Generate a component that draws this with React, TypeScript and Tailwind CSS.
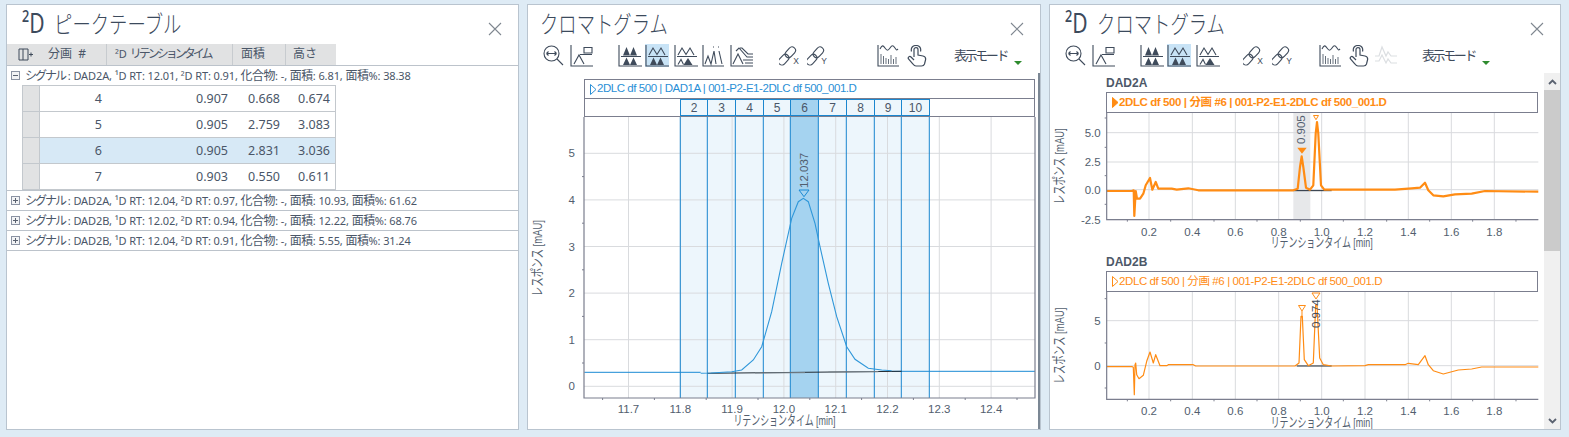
import React from "react";

const INK = "#3f4b5b";

function CloseX() {
  return (
    <svg width="14" height="14" viewBox="0 0 14 14" className="shrink-0">
      <path d="M1 1L13 13M13 1L1 13" stroke="#7f8790" strokeWidth="1.1" fill="none" />
    </svg>
  );
}

function Zoom() {
  return (
    <svg width="21" height="21" viewBox="0 0 21 21" fill="none" stroke={INK} strokeWidth="1.1">
      <circle cx="8.5" cy="8.5" r="7.5" />
      <path d="M3.5 8.5H13.5M3.5 8.5L5.5 6.5M3.5 8.5L5.5 10.5M13.5 8.5L11.5 6.5M13.5 8.5L11.5 10.5M14 14L20 20" />
    </svg>
  );
}

function BoxPeak() {
  return (
    <svg width="23" height="22" viewBox="0 0 23 22" fill="none" stroke={INK} strokeWidth="1.1">
      <path d="M1 0V21H23M4 19L9 10L14 19" />
      <path d="M14 2.500H22V8H14ZM10 9.500H22" />
    </svg>
  );
}

function Peaks({ v }: { v: number }) {
  return (
    <svg width="24" height="22" viewBox="0 0 24 22" fill="none" stroke={INK} strokeWidth="1.1">
      <path d="M1 0V21H24M3 11.500H23" />
      {v === 0 ? (
        <path d="M8.500 2L12 10.500H5ZM15.500 2L19 10.500H12Z" fill={INK} stroke="none" />
      ) : (
        <path d="M4 10L8 3L12 9.500L16 3L20 10" />
      )}
      {v === 2 ? (
        <>
          <path d="M4 19.500L7 14.500L9.500 19.500" />
          <path d="M14 13L18.500 20H9.500Z" fill={INK} stroke="none" />
        </>
      ) : (
        <path d="M8.500 12.500L12 20H5ZM15.500 12.500L19 20H12Z" fill={INK} stroke="none" />
      )}
    </svg>
  );
}

function Peaks4() {
  return (
    <svg width="22" height="22" viewBox="0 0 22 22" fill="none" stroke={INK} strokeWidth="1.1">
      <path d="M1 0V21H22M3 19L6 11L9 19L12 6L14 19M17 6L20 19" />
      <path d="M11 2H13M16 2H18" strokeDasharray="1 1" />
    </svg>
  );
}

function PeaksOverlay() {
  return (
    <svg width="23" height="22" viewBox="0 0 23 22" fill="none" stroke={INK} strokeWidth="1.1">
      <path d="M1 0V21H23M3 19L8 9L13 19" />
      <path d="M6 6L9 3L17 12H23M10 3H12L18 9H23M13 15H23M15 18H23" />
    </svg>
  );
}

function Link({ a }: { a: string }) {
  return (
    <span className="relative block h-[22px] w-[22px]">
      <svg width="20" height="22" viewBox="0 0 20 22" fill="none" stroke={INK} strokeWidth="1.1">
        <g transform="rotate(-48 8 11)">
          <rect x="-3" y="7.500" width="12" height="7" rx="3.500" />
          <rect x="7" y="7.500" width="12" height="7" rx="3.500" />
        </g>
      </svg>
      <span className="absolute bottom-[1px] right-[2px] font-['Liberation_Sans',sans-serif] text-[8.5px] leading-none text-[#3f4b5b]">
        {a}
      </span>
    </span>
  );
}

function Bars() {
  return (
    <svg width="22" height="22" viewBox="0 0 22 22" fill="none" stroke={INK} strokeWidth="1.1">
      <path d="M1 0V21H22" />
      <path d="M3 4C5 0 6 0 8 3S11 6 13 3S16 0 18 3S20 5 21 4" />
      <path d="M4 9V19M6.500 11V19M9 13V19M11.500 14V19M14 10V19M16.500 14V19M19 12V19" strokeWidth="0.8" />
    </svg>
  );
}

function Hand() {
  return (
    <svg width="20" height="22" viewBox="0 0 20 22" fill="none" stroke={INK} strokeWidth="1.2">
      <path d="M7 12V4.500C7 2 11 2 11 4.500V10L16 11C18 11.500 19 13 18.500 15L17.500 19C17 20.500 16 21 14.500 21H9C7.500 21 7 20.500 6 19L1.500 14C0.500 12.500 2.500 10.500 4 12L7 15" />
      <path d="M4.500 6.500C3.500 2.500 6 0.500 9 0.500C12 0.500 14.500 2.500 13.500 6.500" />
    </svg>
  );
}

function Faded() {
  return (
    <svg width="22" height="22" viewBox="0 0 22 22" fill="none" stroke="#dcdfe2" strokeWidth="1.2">
      <path d="M0 11H4L7 2L11 11L13 7L16 11H22M0 16H4L7 10L11 18L13 14L16 18H22" />
    </svg>
  );
}

function Mode({ ml }: { ml: string }) {
  return (
    <div className={`flex h-[23px] items-end ${ml}`}>
      <span className="mb-[2px] font-['Noto_Sans_CJK_JP',sans-serif] text-[13px] leading-[20px] tracking-[-2.4px] text-[#3f4b5b]">
        表示モード
      </span>
      <svg width="8" height="4" viewBox="0 0 8 4" className="mb-[2px] ml-[7px]">
        <path d="M0 0H8L4 4Z" fill="#2e8b2e" />
      </svg>
    </div>
  );
}

function Selected({ children }: { children: React.ReactNode }) {
  return <div className="flex h-[23px] w-[24px] items-center justify-center bg-[#c8e3f6]">{children}</div>;
}

function Header({ title, sup, pad }: { title: string; sup?: boolean; pad: string }) {
  return (
    <div className={`flex h-[39px] shrink-0 items-center justify-between pr-[16px] ${pad}`}>
      <h1 className="mb-[4px] origin-left scale-x-[0.78] whitespace-nowrap font-['Noto_Sans_CJK_JP',sans-serif] text-[23.5px] font-light leading-[34px] text-[#3c4a5c]">
        {sup ? <span className="mr-[12px] font-['Noto_Sans',sans-serif] text-[27px] font-normal">²D</span> : null}
        {title}
      </h1>
      <div className="mt-[8px]">
        <CloseX />
      </div>
    </div>
  );
}

const K = ({ children }: { children: React.ReactNode }) => (
  <span className="text-[12px] tracking-[-2px]">{children}</span>
);
const H = ({ children }: { children: React.ReactNode }) => <span className="text-[12px] tracking-[-0.5px]">{children}</span>;

function GroupRow({ open, s, d1, d2, a, p, h = "h-[20px]" }: { open?: boolean; s: string; d1: string; d2: string; a: string; p: string; h?: string }) {
  return (
    <div className={`flex items-center border-b border-[#bcc3cb] pl-[4px] ${h}`}>
      <svg width="9" height="9" viewBox="0 0 9 9" className="mr-[5px] shrink-0">
        <rect x="0.500" y="0.500" width="8" height="8" fill="#f2f3f5" stroke="#8b93a3" />
        <path d={open ? "M2 4.500H7" : "M2 4.500H7M4.500 2V7"} stroke="#5a6270" />
      </svg>
      <span className="whitespace-nowrap text-[11px] tracking-[-0.1px] text-[#4a5668]">
        <K>シグナル</K> : DAD{s}, ¹D RT: {d1}, ²D RT: {d2}, <H>化合物</H>: -, <H>面積</H>: {a}, <H>面積</H>%: {p}
      </span>
    </div>
  );
}

function PeakTable() {
  const rows = [
    ["4", "0.907", "0.668", "0.674"],
    ["5", "0.905", "2.759", "3.083"],
    ["6", "0.905", "2.831", "3.036"],
    ["7", "0.903", "0.550", "0.611"],
  ];
  return (
    <section className="flex h-[426px] w-[513px] shrink-0 flex-col border border-[#b9c4cf] bg-white">
      <Header title="ピークテーブル" sup pad="pl-[15px]" />
      <div className="font-['Noto_Sans','Noto_Sans_CJK_JP',sans-serif]">
        <div className="flex h-[21px] w-[329px] bg-[#e1e2e3] text-[12px] text-[#4a5668]">
          <div className="flex w-[34px] items-center justify-center pl-[3px]">
            <svg width="15" height="13" viewBox="0 0 15 13" fill="none" stroke={INK} strokeWidth="1">
              <path d="M10 1H1V12H10V1M5 1V12M11 6.500H15M13 4.500V8.500" />
            </svg>
          </div>
          <div className="w-[66px] border-r border-[#c7cbcf] pl-[7px] leading-[20px]">分画&nbsp; #</div>
          <div className="w-[126px] border-r border-[#c7cbcf] pl-[8px] leading-[20px]">
            <span className="text-[11px]">²D </span>
            <span className="tracking-[-3px]">リテンションタイム</span>
          </div>
          <div className="w-[53px] border-r border-[#c7cbcf] pl-[8px] leading-[20px]">面積</div>
          <div className="w-[49px] pl-[7px] leading-[20px]">高さ</div>
        </div>
        <div className="border-t border-[#bcc3cb]" />
        <GroupRow open h="h-[19px] border-b-0" s="2A" d1="12.01" d2="0.91" a="6.81" p="38.38" />
        <div className="border-b border-[#bcc3cb] pl-[15px]">
          <div className="w-[314px] border-l border-t border-[#c3c8cd]">
            {rows.map((r, i) => (
              <div
                key={r[0]}
                className={`flex h-[26px] border-b border-[#c3c8cd] text-[12.5px] leading-[25px] text-[#4a5668] ${i === 2 ? "bg-[#d7e9f6]" : ""}`}
              >
                <div className="w-[17px] border-r border-[#c3c8cd] bg-[#e1e2e3]" />
                <div className="w-[66px] pr-[4px] text-right">{r[0]}</div>
                <div className="w-[126px] pr-[4px] text-right">{r[1]}</div>
                <div className="w-[53px] pr-[5px] text-right">{r[2]}</div>
                <div className="w-[51px] border-r border-[#c3c8cd] pr-[5px] text-right">{r[3]}</div>
              </div>
            ))}
          </div>
        </div>
        <GroupRow s="2A" d1="12.04" d2="0.97" a="10.93" p="61.62" />
        <GroupRow s="2B" d1="12.02" d2="0.94" a="12.22" p="68.76" />
        <GroupRow s="2B" d1="12.04" d2="0.91" a="5.55" p="31.24" />
      </div>
    </section>
  );
}

const GRID = "#d9dbde";
const AXIS = "#7b7e8e";
const TICK = "#525e6e";
const FONT = "'Liberation Sans','Noto Sans CJK JP',sans-serif";

function MainChart() {
  const ox = 528;
  const oy = 117;
  const X = (t: number) => 680.3 + (t - 11.8) * 518 - ox;
  const Y = (v: number) => 386.3 - 46.6 * v - oy;
  const left = 584 - ox;
  const right = 1035 - ox;
  const top = 0;
  const bottom = 398 - oy;
  const bands = [680.3, 707.3, 735.3, 763.3, 790.3, 818.3, 846.3, 874.3, 901.3, 929.3].map((b) => b - ox);
  const z = (a: number, b: number) => `${(a / 3 + 525 - ox).toFixed(1)},${(b / 3 + 130 - oy).toFixed(1)}`;
  const curve = [
    [527, 730], [557, 729], [620, 725], [650, 720], [685, 690], [710, 650], [740, 545], [770, 400], [800, 265], [820, 215],
    [835, 205], [850, 215], [870, 280], [885, 350], [910, 460], [935, 560], [965, 650], [990, 688], [1030, 715], [1070, 720], [1100, 722],
  ];
  return (
    <svg width="510" height="312" viewBox="0 0 510 312" className="block">
      <rect x={bands[0]} y={top} width={bands[9] - bands[0]} height={bottom} fill="#edf6fc" />
      {[11.7, 11.8, 11.9, 12.0, 12.1, 12.2, 12.3, 12.4].map((t) => (
        <line key={t} x1={X(t)} x2={X(t)} y1={top} y2={bottom} stroke={GRID} strokeWidth="1" />
      ))}
      {[0, 1, 2, 3, 4, 5].map((v) => (
        <line key={v} x1={left} x2={right} y1={Y(v)} y2={Y(v)} stroke={GRID} strokeWidth="1" />
      ))}
      <rect x={bands[4]} y={top} width={bands[5] - bands[4]} height={bottom} fill="#a5d3f0" />
      {bands.map((b) => (
        <line key={b} x1={b} x2={b} y1={top} y2={bottom} stroke="#1a86cf" strokeWidth="1" />
      ))}
      <polyline points={`${z(178, 727)} ${z(527, 727)}`} stroke="#1a8ad4" fill="none" />
      <polyline points={`${z(1100, 724)} ${z(1530, 724)}`} stroke="#1a8ad4" fill="none" />
      <polyline points={`${z(547, 730)} ${z(1130, 724)}`} stroke="#222b33" fill="none" />
      <polyline points={`${z(690, 729)} ${z(840, 728)}`} stroke="#7f8a92" fill="none" />
      <polyline points={`${z(910, 726)} ${z(1060, 725)}`} stroke="#7f8a92" fill="none" />
      <polyline points={curve.map((p) => z(p[0], p[1])).join(" ")} fill="none" stroke="#2f97d9" strokeWidth="1.1" />
      <path d="M271 73H281L276 79.700Z" fill="none" stroke="#1a8ad4" />
      <text transform="translate(279.500 71) rotate(-90)" fontFamily={FONT} fontSize="11.500" fill={TICK}>
        12.037
      </text>
      <path d={`M${left} 0V${bottom}H${right}V0`} fill="none" stroke={AXIS} strokeWidth="1.2" />
      {[0, 1, 2, 3, 4, 5].map((v) => (
        <text key={v} x={left - 9} y={Y(v) + 4} textAnchor="end" fontFamily={FONT} fontSize="11.500" fill={TICK}>
          {v}
        </text>
      ))}
      {[0.5, 1.5, 2.5, 3.5, 4.5].map((v) => (
        <line key={v} x1={left - 2} x2={left} y1={Y(v)} y2={Y(v)} stroke={AXIS} />
      ))}
      {[11.65, 11.75, 11.85, 11.95, 12.05, 12.15, 12.25, 12.35, 12.45].map((t) => (
        <line key={t} x1={X(t)} x2={X(t)} y1={bottom} y2={bottom + 2} stroke={AXIS} />
      ))}
      {[11.7, 11.8, 11.9, 12.0, 12.1, 12.2, 12.3, 12.4].map((t) => (
        <text key={t} x={X(t)} y={bottom + 15} textAnchor="middle" fontFamily={FONT} fontSize="11.500" fill={TICK}>
          {t.toFixed(1)}
        </text>
      ))}
      <text x={X(12.0) + 0.5} y={bottom + 27} textAnchor="middle" textLength="102" lengthAdjust="spacingAndGlyphs" fontFamily={FONT} fontSize="13.500" fill={TICK}>
        リテンションタイム [min]
      </text>
      <text transform={`translate(14 ${Y(2.75)}) rotate(-90)`} textAnchor="middle" textLength="76" lengthAdjust="spacingAndGlyphs" fontFamily={FONT} fontSize="13.500" fill={TICK}>
        レスポンス [mAU]
      </text>
    </svg>
  );
}

function ChromPanel() {
  const nums = [
    [2, 27], [3, 28], [4, 28], [5, 27], [6, 28], [7, 28], [8, 28], [9, 27], [10, 29],
  ];
  return (
    <section className="flex h-[426px] w-[514px] shrink-0 flex-col border border-[#b9c4cf] bg-white">
      <Header title="クロマトグラム" pad="pl-[12px]" />
      <div className="flex h-[23px] shrink-0 items-center pl-[15px]">
        <Zoom />
        <div className="ml-[6px]"><BoxPeak /></div>
        <div className="ml-[25px]"><Peaks v={0} /></div>
        <div className="ml-[3px]"><Selected><Peaks v={1} /></Selected></div>
        <div className="ml-[5px]"><Peaks v={2} /></div>
        <div className="ml-[4px]"><Peaks4 /></div>
        <div className="ml-[6px]"><PeaksOverlay /></div>
        <div className="ml-[26px]"><Link a="X" /></div>
        <div className="ml-[6px]"><Link a="Y" /></div>
        <div className="ml-[48px]"><Bars /></div>
        <div className="ml-[8px]"><Hand /></div>
        <Mode ml="ml-[27px]" />
      </div>
      <div className="mt-[6px] flex-1 border-r-2 border-[#7b8794] pt-[6px]">
        <div className="ml-[56px] w-[451px] border border-[#7b7e8e] font-['Liberation_Sans','Noto_Sans_CJK_JP',sans-serif]">
          <div className="flex h-[19px] items-center border-b border-[#7b7e8e] pl-[5px] text-[11.5px] tracking-[-0.45px] text-[#2a8fd6]">
            <svg width="7" height="11" viewBox="0 0 7 11" fill="none" stroke="#2a8fd6">
              <path d="M0.500 0.500L6 5.500L0.500 10.500Z" />
            </svg>
            2DLC df 500 | DAD1A | 001-P2-E1-2DLC df 500_001.D
          </div>
          <div className="flex h-[17px] pl-[95px] text-[12px] text-[#4a5668]">
            {nums.map(([n, w]) => (
              <div
                key={n}
                style={{ width: w }}
                className={`flex items-center justify-center border-y border-l border-[#1a86cf] last:border-r ${n === 6 ? "bg-[#a5d3f0]" : "bg-[#edf6fc]"}`}
              >
                {n}
              </div>
            ))}
          </div>
        </div>
        <MainChart />
      </div>
    </section>
  );
}

type P = number[][];
const XT = [[312, "0.2"], [442, "0.4"], [571, "0.6"], [701, "0.8"], [830, "1.0"], [960, "1.2"], [1090, "1.4"], [1219, "1.6"], [1348, "1.8"]] as [number, string][];

function SubChart({
  path, pTop, pBot, yt, minor, w, band, peaks,
}: {
  path: P; pTop: number; pBot: number; yt: [number, string][]; minor: number[]; w: number; band?: boolean; peaks: React.ReactNode;
}) {
  const zx = (a: number) => a / 3 - 5;
  const zy = (b: number) => (b - pTop) / 3;
  const h = (pBot - pTop) / 3;
  const left = zx(185);
  const right = zx(1480);
  return (
    <svg width="494" height={h + 30} viewBox={`0 0 494 ${h + 30}`} className="block">
      {band ? <rect x={zx(745)} y={0} width={zx(796) - zx(745)} height={h} fill="#e7e8ea" /> : null}
      {XT.map(([a]) => (
        <line key={a} x1={zx(a)} x2={zx(a)} y1={0} y2={h} stroke={GRID} />
      ))}
      {yt.map(([b]) => (
        <line key={b} x1={left} x2={right} y1={zy(b)} y2={zy(b)} stroke={GRID} />
      ))}
      <polyline points={`${zx(band ? 745 : 755)},${zy(band ? 271 : 284)} ${zx(860)},${zy(band ? 271 : 284)}`} stroke="#1c2733" strokeWidth="1" fill="none" />
      <polyline points={path.map((p) => `${zx(p[0]).toFixed(1)},${zy(p[1]).toFixed(1)}`).join(" ")} fill="none" stroke="#ff8c14" strokeWidth={w} strokeLinejoin="round" />
      {peaks}
      <path d={`M${left} 0V${h}H${right}`} fill="none" stroke={AXIS} strokeWidth="1.2" />
      {yt.map(([b, s]) => (
        <text key={s} x={left - 6} y={zy(b) + 4} textAnchor="end" fontFamily={FONT} fontSize="11.500" fill={TICK}>
          {s}
        </text>
      ))}
      {minor.map((b) => (
        <line key={b} x1={left - 2} x2={left} y1={zy(b)} y2={zy(b)} stroke={AXIS} />
      ))}
      {[247, 377, 507, 636, 766, 895, 1025, 1154, 1283, 1413].map((a) => (
        <line key={a} x1={zx(a)} x2={zx(a)} y1={h} y2={h + 2} stroke={AXIS} />
      ))}
      {XT.map(([a, s]) => (
        <text key={a} x={zx(a)} y={h + 16} textAnchor="middle" fontFamily={FONT} fontSize="11.500" fill={TICK}>
          {s}
        </text>
      ))}
      <text x={zx(830)} y={h + 27.500} textAnchor="middle" textLength="102" lengthAdjust="spacingAndGlyphs" fontFamily={FONT} fontSize="13.500" fill={TICK}>
        リテンションタイム [min]
      </text>
      <text transform={`translate(${zx(58)} ${h / 2}) rotate(-90)`} textAnchor="middle" textLength="76" lengthAdjust="spacingAndGlyphs" fontFamily={FONT} fontSize="13.500" fill={TICK}>
        レスポンス [mAU]
      </text>
    </svg>
  );
}

const PA: P = [[185,272],[260,272],[266,270],[268,347],[272,272],[276,295],[285,295],[295,280],[302,255],[315,233],[322,268],[332,245],[340,265],[380,265],[395,268],[430,264],[460,270],[700,270],[745,270],[758,265],[765,200],[770,168],[775,200],[783,262],[795,268],[805,255],[812,100],[816,65],[820,100],[828,255],[838,268],[1050,268],[1100,264],[1125,262],[1140,247],[1150,270],[1165,285],[1195,288],[1230,282],[1280,280],[1320,272],[1480,274]];
const PB: P = [[185,286],[262,286],[265,288],[268,370],[270,280],[272,275],[275,310],[282,322],[295,312],[305,270],[315,242],[325,275],[332,250],[345,283],[365,283],[370,280],[445,280],[452,284],[750,284],[762,275],[768,135],[772,135],[778,265],[790,283],[805,275],[812,100],[816,100],[824,260],[835,280],[860,284],[960,283],[970,280],[1080,280],[1090,276],[1120,280],[1140,253],[1150,280],[1165,298],[1195,308],[1240,296],[1280,293],[1310,287],[1480,287]];

function SubTitle({ bold }: { bold?: boolean }) {
  return (
    <div className={`ml-[56px] flex h-[21px] w-[432px] items-center border border-[#7b7e8e] pl-[5px] font-['Liberation_Sans','Noto_Sans_CJK_JP',sans-serif] text-[11.5px] tracking-[-0.4px] text-[#ff8c14] ${bold ? "font-bold" : ""}`}>
      <svg width="7" height="11" viewBox="0 0 7 11" className="shrink-0">
        <path d="M0.500 0.500L6 5.500L0.500 10.500Z" fill={bold ? "#ff8c14" : "none"} stroke="#ff8c14" />
      </svg>
      2DLC df 500 | 分画 #6 | 001-P2-E1-2DLC df 500_001.D
    </div>
  );
}

function Label({ t }: { t: string }) {
  return <div className="ml-[56px] h-[18px] font-['Liberation_Sans',sans-serif] text-[12px] font-bold leading-[18px] text-[#4d5868]">{t}</div>;
}

function TwoDPanel() {
  return (
    <section className="flex h-[426px] w-[512px] shrink-0 flex-col border border-[#b9c4cf] bg-white">
      <Header title="クロマトグラム" sup pad="pl-[15px]" />
      <div className="flex h-[23px] shrink-0 items-center pl-[15px]">
        <Zoom />
        <div className="ml-[6px]"><BoxPeak /></div>
        <div className="ml-[25px]"><Peaks v={0} /></div>
        <div className="ml-[3px]"><Selected><Peaks v={1} /></Selected></div>
        <div className="ml-[5px]"><Peaks v={2} /></div>
        <div className="ml-[23px]"><Link a="X" /></div>
        <div className="ml-[7px]"><Link a="Y" /></div>
        <div className="ml-[25px]"><Bars /></div>
        <div className="ml-[8px]"><Hand /></div>
        <div className="ml-[6px]"><Faded /></div>
        <Mode ml="ml-[25px]" />
      </div>
      <div className="mt-[6px] flex min-h-0 flex-1">
        <div className="w-[494px] pt-[1px]">
          <Label t="DAD2A" />
          <SubTitle bold />
          <SubChart
            path={PA}
            pTop={38}
            pBot={358}
            w={2.2}
            band
            yt={[[97, "5.0"], [185, "2.5"], [268, "0.0"], [358, "-2.5"]]}
            minor={[53, 141, 226, 312]}
            peaks={
              <>
                <path d="M247.300 34.700H256.700L252 40.700Z" fill="#ff8c14" />
                <path d="M263.500 2.500H268.500L266 6.700Z" fill="none" stroke="#ff8c14" />
                <text transform="translate(255.500 31) rotate(-90)" fontFamily={FONT} fontSize="11.500" fill={TICK}>0.905</text>
              </>
            }
          />
          <div className="h-[3px]" />
          <Label t="DAD2B" />
          <SubTitle />
          <SubChart
            path={PB}
            pTop={62}
            pBot={384}
            w={1.2}
            yt={[[148, "5"], [283, "0"]]}
            minor={[82, 215, 350]}
            peaks={
              <>
                <path d="M248.500 13.500H255.500L252 19Z" fill="none" stroke="#ff8c14" />
                <line x1="252" x2="252" y1="19" y2="26" stroke="#ff8c14" />
                <path d="M262 1H270L266 7Z" fill="none" stroke="#ff8c14" />
                <text transform="translate(270 36) rotate(-90)" fontFamily={FONT} fontSize="11.500" fill="#3f4b5b">0.974</text>
              </>
            }
          />
        </div>
        <div className="flex min-w-0 flex-1 flex-col bg-[#f0f0f0]">
          <div className="flex h-[17px] items-center justify-center">
            <svg width="9" height="6" viewBox="0 0 9 6"><path d="M1 5L4.500 1.500L8 5" fill="none" stroke="#5a6270" strokeWidth="1.800" /></svg>
          </div>
          <div className="h-[161px] bg-[#cbcbcb]" />
          <div className="flex-1" />
          <div className="flex h-[17px] items-center justify-center">
            <svg width="9" height="6" viewBox="0 0 9 6"><path d="M1 1L4.500 4.500L8 1" fill="none" stroke="#5a6270" strokeWidth="1.800" /></svg>
          </div>
        </div>
      </div>
    </section>
  );
}

export default function App() {
  return (
    <div className="flex h-[437px] w-[1569px] gap-[8px] overflow-hidden bg-[#deebf5] pl-[6px] pt-[4px]">
      <PeakTable />
      <ChromPanel />
      <TwoDPanel />
    </div>
  );
}
